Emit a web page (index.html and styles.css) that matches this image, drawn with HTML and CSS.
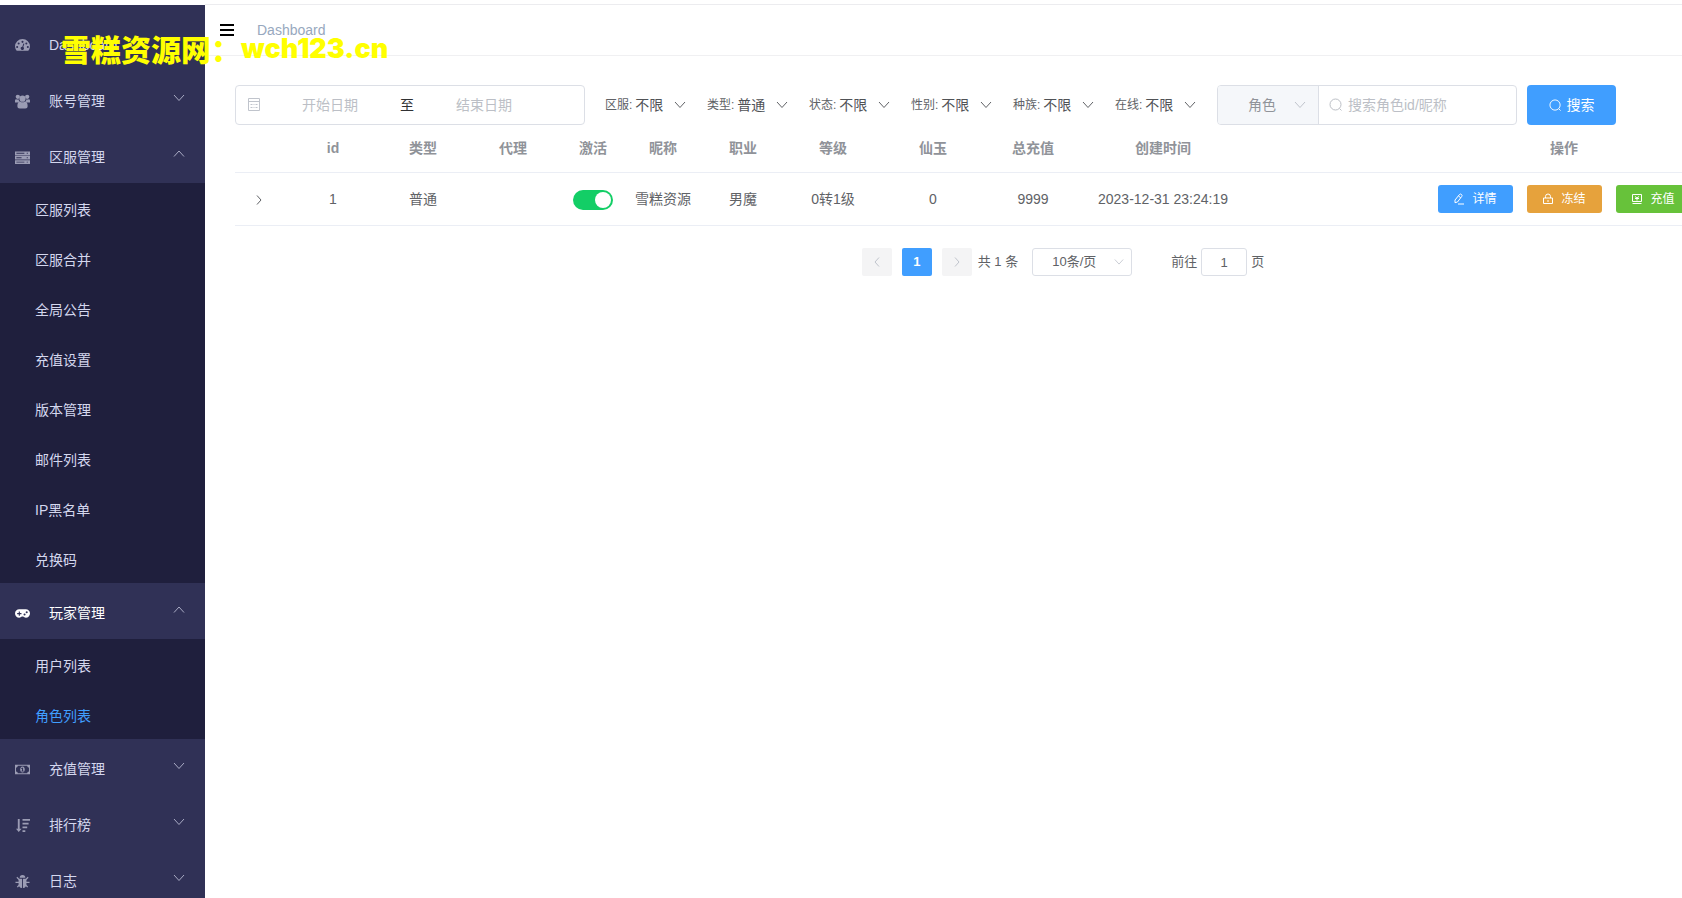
FILE: index.html
```html
<!DOCTYPE html>
<html lang="zh-CN">
<head>
<meta charset="utf-8">
<title>角色列表</title>
<link rel="stylesheet" href="styles.css">
</head>
<body>
<svg class="defs" aria-hidden="true">
  <symbol id="down" viewBox="0 0 12 12"><path d="M1 3l5 5.500 5-5.500" fill="none" stroke="currentColor"/></symbol>
  <symbol id="up" viewBox="0 0 12 12"><path d="M1 8.500L6 3l5 5.500" fill="none" stroke="currentColor"/></symbol>
  <symbol id="right" viewBox="0 0 12 12"><path d="M4 1.500l4 4.500-4 4.500" fill="none" stroke="currentColor"/></symbol>
  <symbol id="left" viewBox="0 0 12 12"><path d="M8 1.500L4 6l4 4.500" fill="none" stroke="currentColor"/></symbol>
  <symbol id="search" viewBox="0 0 14 14"><g fill="none" stroke="currentColor"><circle cx="6.500" cy="6.500" r="5.500"/><path d="M10.500 10.500l2 2"/></g></symbol>
</svg>
<div class="app">
  <nav class="sidebar">
    <ul class="menu">
      <li><a class="item" href="#"><svg class="icon" viewBox="0 0 16 16"><path fill="currentColor" fill-rule="evenodd" d="M1.800 13.500A8 8 0 0 1 0 9a8 8 0 0 1 16 0 8 8 0 0 1-1.800 4.500zM8 3a1.100 1.100 0 1 0 0 2.200A1.100 1.100 0 0 0 8 3zM3.900 4.700a1.100 1.100 0 1 0 0 2.200 1.100 1.100 0 0 0 0-2.200zm8.200 0a1.100 1.100 0 1 0 0 2.200 1.100 1.100 0 0 0 0-2.200zM2.300 8.500a1.100 1.100 0 1 0 0 2.200 1.100 1.100 0 0 0 0-2.200zm11.400 0a1.100 1.100 0 1 0 0 2.200 1.100 1.100 0 0 0 0-2.200zM9 5.800L7.800 9.200a1.800 1.800 0 1 0 1 .3L10 6.100z"/></svg><span>Dashboard</span></a></li>
      <li><a class="item" href="#"><svg class="icon" viewBox="0 0 16 16"><g fill="currentColor"><circle cx="3" cy="3" r="2.300"/><circle cx="13" cy="3" r="2.300"/><circle cx="8" cy="5" r="3.300"/><path d="M0 9V7q0-1.500 1.300-1.500.8.600 2.700.4Q4 8 5 8.300 3.500 8.500 3 9zM16 9V7q0-1.500-1.300-1.500-.8.600-2.700.4Q12 8 11 8.300q1.500.2 2 .7zM2.500 13q0-5 3-5 2.500 1.800 5 0 3 0 3 5 0 2.500-2.500 2.500H5Q2.500 15.500 2.500 13z"/></g></svg><span>账号管理</span><svg class="arrow"><use href="#down"/></svg></a></li>
      <li><a class="item" href="#"><svg class="icon" viewBox="0 0 16 16"><path fill="currentColor" fill-rule="evenodd" d="M0 1.500h16v4H0zM1.500 3v1H10V3zm11 0v1h1.200V3zM0 6.200h16v4H0zm1.500 1.500v1H7v-1zm11 0v1h1.200v-1zM0 10.900h16v4H0zm1.500 1.500v1H10v-1zm11 0v1h1.200v-1z"/></svg><span>区服管理</span><svg class="arrow"><use href="#up"/></svg></a>
        <ul class="submenu">
          <li><a href="#">区服列表</a></li>
          <li><a href="#">区服合并</a></li>
          <li><a href="#">全局公告</a></li>
          <li><a href="#">充值设置</a></li>
          <li><a href="#">版本管理</a></li>
          <li><a href="#">邮件列表</a></li>
          <li><a href="#">IP黑名单</a></li>
          <li><a href="#">兑换码</a></li>
        </ul></li>
      <li><a class="item current" href="#"><svg class="icon" viewBox="0 0 16 16"><path fill="currentColor" fill-rule="evenodd" d="M4.500 3.500h7a4.500 4.500 0 0 1 0 9q-1.700 0-2.800-1.200H7.300Q6.200 12.500 4.500 12.500a4.500 4.500 0 0 1 0-9zM4 5.800v1.700H2.300v1.200H4v1.700h1.200V8.700h1.700V7.500H5.200V5.800zM10.200 8a1.100 1.100 0 1 0 0 2.200 1.100 1.100 0 0 0 0-2.200zm2.300-2.400a1.100 1.100 0 1 0 0 2.200 1.100 1.100 0 0 0 0-2.200z"/></svg><span>玩家管理</span><svg class="arrow"><use href="#up"/></svg></a>
        <ul class="submenu">
          <li><a href="#">用户列表</a></li>
          <li><a class="active" href="#">角色列表</a></li>
        </ul></li>
      <li><a class="item" href="#"><svg class="icon" viewBox="0 0 16 16"><path fill="currentColor" fill-rule="evenodd" d="M0 3h16v10H0zm3 1.100Q3 6 1.100 6v4Q3 10 3 11.900h10q0-1.900 1.900-1.900V6Q13 6 13 4.100zM8 4.800c3.300 0 3.300 6.400 0 6.400s-3.300-6.400 0-6.400zm-.6 1.300l-1 .8.400.6.700-.4v2.200h-.8v.8h2.700v-.8h-.8V6.100z"/></svg><span>充值管理</span><svg class="arrow"><use href="#down"/></svg></a></li>
      <li><a class="item" href="#"><svg class="icon" viewBox="0 0 16 16"><path fill="currentColor" d="M3 1h2v10.500h2L4 15l-3-3.500h2zM8 1h8v2H8zm0 4h6.500v2H8zm0 4h5v2H8zm0 4h3v2H8z"/></svg><span>排行榜</span><svg class="arrow"><use href="#down"/></svg></a></li>
      <li><a class="item" href="#"><svg class="icon" viewBox="0 0 16 16"><path fill="currentColor" d="M5 4a3 3 0 0 1 6 0z"/><path fill="currentColor" d="M3.800 5h3.700v10Q3.800 14.500 3.800 10zM8.500 5h3.700v5q0 4.500-3.700 5z"/><path fill="none" stroke="currentColor" stroke-width="1.400" d="M4.500 6L2 3.500M11.500 6L14 3.500M4.500 9H.5M11.500 9h4M4.800 11.500L2.500 14M11.200 11.500l2.300 2.500"/></svg><span>日志</span><svg class="arrow"><use href="#down"/></svg></a></li>
    </ul>
  </nav>

  <div class="page">
    <header class="topbar">
      <button class="burger" type="button" aria-label="折叠菜单"><i></i><i></i><i></i></button>
      <a class="crumb" href="#">Dashboard</a>
    </header>
    <main class="content">
      <form class="filters">
        <div class="daterange">
          <svg class="cal" viewBox="0 0 14 14"><path fill="none" stroke="currentColor" d="M1.500.5h11v12h-11zM1.500 3.500h11M3.500 6.500h2m1 0h1m1 0h2m-7 3h2m1 0h1m1 0h2"/></svg>
          <input type="text" aria-label="开始日期" placeholder="开始日期">
          <span>至</span>
          <input type="text" aria-label="结束日期" placeholder="结束日期">
        </div>
        <div class="selects">
          <label>区服:<select><option>不限</option></select><svg class="chev"><use href="#down"/></svg></label>
          <label>类型:<select><option>普通</option></select><svg class="chev"><use href="#down"/></svg></label>
          <label>状态:<select><option>不限</option></select><svg class="chev"><use href="#down"/></svg></label>
          <label>性别:<select><option>不限</option></select><svg class="chev"><use href="#down"/></svg></label>
          <label>种族:<select><option>不限</option></select><svg class="chev"><use href="#down"/></svg></label>
          <label>在线:<select><option>不限</option></select><svg class="chev"><use href="#down"/></svg></label>
        </div>
        <div class="searchbox">
          <div class="scope"><select aria-label="搜索类型"><option>角色</option></select><svg><use href="#down"/></svg></div>
          <svg class="glass"><use href="#search"/></svg>
          <input type="text" aria-label="搜索" placeholder="搜索角色id/昵称">
        </div>
        <button class="submit" type="button"><svg><use href="#search"/></svg>搜索</button>
      </form>

      <div class="listing">
        <table>
          <colgroup><col class="w48"><col class="w100"><col class="w80"><col class="w100"><col class="w60"><col class="w80"><col class="w80"><col class="w100"><col class="w100"><col class="w100"><col class="w160"><col></colgroup>
          <thead><tr><th></th><th>id</th><th>类型</th><th>代理</th><th>激活</th><th>昵称</th><th>职业</th><th>等级</th><th>仙玉</th><th>总充值</th><th>创建时间</th><th>操作</th></tr></thead>
          <tbody><tr>
            <td><button class="expand" type="button" aria-label="展开"><svg><use href="#right"/></svg></button></td>
            <td>1</td><td>普通</td><td></td>
            <td><input class="switch" type="checkbox" aria-label="激活" checked></td>
            <td>雪糕资源</td><td>男魔</td><td>0转1级</td><td>0</td><td>9999</td><td>2023-12-31 23:24:19</td>
            <td><div class="ops">
              <button class="op blue" type="button"><svg viewBox="0 0 12 12"><path fill="none" stroke="currentColor" d="M2 7l4.500-5.500q1-1 2 0t.2 2L4.500 9 2 9.700zM5.500 3l2.300 1.800M5 11h6"/></svg>详情</button>
              <button class="op orange" type="button"><svg viewBox="0 0 12 12"><path fill="none" stroke="currentColor" d="M1.500 5h9v5.500h-9zM3.500 5V3.500a2.500 2.500 0 0 1 5 0V5M6 7v2"/></svg>冻结</button>
              <button class="op green" type="button"><svg viewBox="0 0 12 12"><path fill="none" stroke="currentColor" d="M1.500 1.500h9v7h-9zM1.500 10.500h9M4 3.500l2 1.500 2-1.500M4 5.500h4M6 5v2.500"/></svg>充值</button>
            </div></td>
          </tr></tbody>
        </table>
        <div class="pager">
          <button class="pg" type="button" aria-label="上一页" disabled><svg><use href="#left"/></svg></button>
          <button class="pg on" type="button">1</button>
          <button class="pg" type="button" aria-label="下一页" disabled><svg><use href="#right"/></svg></button>
          <span class="total">共 1 条</span>
          <div class="size"><select aria-label="每页条数"><option>10条/页</option></select><svg><use href="#down"/></svg></div>
          <label class="jump">前往<input type="text" value="1">页</label>
        </div>
      </div>
    </main>
  </div>
</div>
<div class="watermark"><span>雪糕资源网：</span><b>wch123.cn</b></div>
</body>
</html>
```
FILE: styles.css
```css
* { box-sizing: border-box; }
body {
  margin: 0;
  overflow: hidden;
  background: #fff;
  color: #606266;
  font: 14px/20px "Liberation Sans", "Noto Sans CJK SC", sans-serif;
}
input, select, button { font: inherit; color: inherit; border: 0; padding: 0; margin: 0; background: none; outline: 0; }
select { appearance: none; text-align: center; }
button { cursor: pointer; }
a { color: inherit; text-decoration: none; }
ul { list-style: none; margin: 0; padding: 0; }
svg { width: 12px; height: 12px; flex: none; }
::placeholder { color: #bcbfc6; opacity: 1; }
.defs { display: none; }

.app { display: flex; height: 100vh; padding-top: 4px; }

.sidebar { width: 205px; flex: none; overflow: hidden; background: #303156; color: #d4d7ee; margin-top: 1px; padding-top: 10px; }
.item { display: flex; align-items: center; height: 56px; padding: 4px 20px 0 15px; }
.item .icon { width: 15px; height: 15px; margin-right: 19px; color: #9b9cb4; }
.item .arrow { margin: 0 0 6px auto; color: #a9abc4; }
.item.current, .item.current .icon { color: #fff; }
.submenu { background: #1f1f3d; }
.submenu a { display: flex; align-items: center; height: 50px; padding: 4px 0 0 35px; }
.submenu .active { color: #409eff; }

.page { flex: 1; min-width: 0; overflow: hidden; border-top: 1px solid #ececef; }
.topbar { display: flex; align-items: center; height: 51px; padding-left: 15px; border-bottom: 1px solid #f0f0f2; }
.burger { display: grid; gap: 3px; width: 14px; }
.burger i { height: 2px; background: #000; }
.crumb { margin-left: 23px; color: #97a8be; }
.content { padding: 29px 0 0 30px; }

.filters { display: flex; align-items: center; height: 40px; }
.daterange { display: flex; align-items: center; width: 350px; height: 40px; padding: 0 11px; border: 1px solid #dcdfe6; border-radius: 4px; }
.daterange .cal { width: 14px; height: 14px; color: #c0c4cc; }
.daterange input { width: 138px; text-align: center; }
.daterange span { width: 16px; color: #303133; text-align: center; }
.selects { display: flex; margin-left: 20px; }
.selects label { display: flex; align-items: center; width: 102px; font-size: 12px; }
.selects select { width: 32px; margin-left: 1px; font-size: 14px; color: #505256; }
.selects .chev { margin-left: 9px; }
.searchbox { display: flex; align-items: center; width: 300px; height: 40px; border: 1px solid #dcdfe6; border-radius: 4px; overflow: hidden; }
.scope { display: flex; align-items: center; align-self: stretch; width: 101px; padding-left: 24px; background: #f5f7fa; border-right: 1px solid #dcdfe6; color: #909399; }
.scope select { width: 40px; }
.scope svg { margin-left: 12px; color: #c0c4cc; }
.searchbox .glass { width: 14px; height: 14px; margin: 0 5px 0 10px; color: #bcbfc6; }
.searchbox input { flex: 1; min-width: 0; }
.submit { display: flex; align-items: center; justify-content: center; gap: 5px; width: 89px; height: 40px; margin-left: 10px; border-radius: 4px; background: #409eff; color: #fff; }
.submit svg { width: 13px; height: 13px; }

.listing { width: 1656px; }
table { width: 1650px; table-layout: fixed; border-collapse: separate; border-spacing: 0; }
.w48 { width: 48px; }
.w60 { width: 60px; }
.w80 { width: 80px; }
.w100 { width: 100px; }
.w160 { width: 160px; }
th, td { padding: 0; text-align: center; border-bottom: 1px solid #ebeef5; white-space: nowrap; }
th { height: 48px; padding-bottom: 2px; color: #909399; font-weight: 700; }
td { height: 53px; }
.expand { display: inline-flex; vertical-align: middle; }
.switch { appearance: none; display: inline-grid; align-items: center; justify-content: end; width: 40px; height: 20px; padding-right: 2px; border-radius: 10px; background: #13ce66; vertical-align: middle; }
.switch::before { content: ""; width: 16px; height: 16px; border-radius: 50%; background: #fff; }
.ops { display: flex; justify-content: center; gap: 14px; }
.op { display: flex; align-items: center; justify-content: center; gap: 7px; width: 75px; height: 28px; border-radius: 3px; color: #fff; font-size: 12px; }
.blue { background: #409eff; }
.orange { background: #e6a23c; }
.green { background: #67c23a; }

.pager { display: flex; align-items: center; justify-content: center; margin-top: 22px; height: 28px; font-size: 13px; }
.pg { display: grid; place-items: center; width: 30px; height: 28px; margin-right: 10px; border-radius: 2px; background: #f4f4f5; color: #c0c4cc; }
.pg.on { background: #409eff; color: #fff; font-weight: 700; }
.total { margin: 0 14px 0 -4px; }
.size { display: flex; align-items: center; width: 100px; height: 28px; padding-left: 11px; border: 1px solid #dcdfe6; border-radius: 3px; }
.size select { width: 60px; }
.size svg { width: 10px; margin-left: 10px; color: #c0c4cc; }
.jump { display: flex; align-items: center; margin-left: 39px; }
.jump input { width: 46px; height: 28px; margin: 0 4px; text-align: center; border: 1px solid #dcdfe6; border-radius: 3px; }

.watermark { position: absolute; left: 61px; top: 28px; display: flex; align-items: center; height: 40px; color: #ff0; white-space: nowrap; pointer-events: none; }
.watermark span { font: 900 30px/40px "Noto Sans CJK SC", sans-serif; }
.watermark b { padding-top: 2px; font: 900 27px/40px Inter, sans-serif; }
```
